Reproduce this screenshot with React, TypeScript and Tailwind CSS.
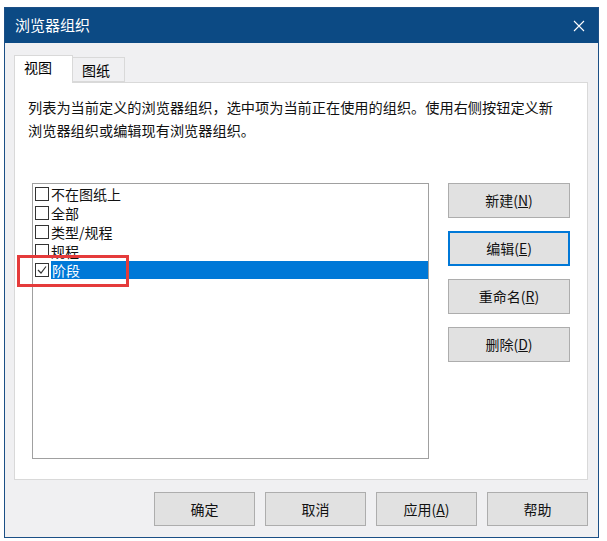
import React from "react";

const items = ["不在图纸上", "全部", "类型/规程", "规程", "阶段"];

const SideButton: React.FC<{ label: string; k: string; focused?: boolean }> = ({
  label,
  k,
  focused,
}) => (
  <button
    type="button"
    className={`flex h-[35px] w-[122px] items-center justify-center bg-[#e1e1e1] text-[14px] text-[#111] ${
      focused ? "border-2 border-[#0078d7]" : "border border-[#adadad]"
    }`}
  >
    {label}(<span className="underline">{k}</span>)
  </button>
);

const FooterButton: React.FC<{ children: React.ReactNode }> = ({ children }) => (
  <button
    type="button"
    className="flex h-[34px] w-[101px] items-center justify-center border border-[#adadad] bg-[#e1e1e1] text-[14px] text-[#111]"
  >
    {children}
  </button>
);

export default function App() {
  const [checked, setChecked] = React.useState<boolean[]>([false, false, false, false, true]);

  return (
    <div
      className="h-[541px] w-[607px] bg-white pl-[4px] pt-[7px]"
      style={{ fontFamily: '"Noto Sans CJK SC", "Noto Sans", sans-serif' }}
    >
      {/* dialog window */}
      <div className="flex h-[531px] w-[595px] flex-col border border-[#1b4f86] bg-[#f0f0f2]">
        {/* title bar */}
        <div className="flex h-[35px] shrink-0 items-center justify-between bg-[#0c4a84] pl-[10px] pr-[13px] text-white">
          <span className="text-[15px]">浏览器组织</span>
          <svg width="12" height="12" viewBox="0 0 12 12" stroke="white" strokeWidth="1.1">
            <path d="M1 1L11 11M11 1L1 11" />
          </svg>
        </div>

        {/* body */}
        <div className="flex flex-1 flex-col pl-[9px] pr-[10px] pt-[12px]">
          {/* tabs */}
          <div className="relative z-10 flex h-[27px] items-end">
            <div className="-mb-px flex h-[28px] w-[59px] items-start border border-b-0 border-[#d9d9d9] bg-white pl-[9px] pt-[1px] text-[14px]">
              视图
            </div>
            <div className="flex h-[25px] w-[52px] items-start border border-l-0 border-[#d9d9d9] bg-[#f0f0f2] pl-[9px] pt-[2px] text-[14px]">
              图纸
            </div>
          </div>

          {/* tab panel */}
          <div className="flex h-[398px] flex-col border border-[#d9d9d9] bg-white pl-[13px] pt-[13px]">
            <p className="whitespace-nowrap text-[14.2px] leading-[23px] text-[#111]">
              列表为当前定义的浏览器组织，选中项为当前正在使用的组织。使用右侧按钮定义新
              <br />
              浏览器组织或编辑现有浏览器组织。
            </p>

            <div className="mt-[41px] flex items-start">
              {/* list box */}
              <div className="ml-[4px] flex h-[276px] w-[397px] flex-col border border-[#a0a0a0] bg-white">
                {items.map((item, i) => (
                  <div
                    key={item}
                    className="relative flex h-[19px] items-center pl-[2px]"
                    onClick={() => setChecked(checked.map((c, j) => (j === i ? !c : c)))}
                  >
                    <span className="flex h-[14px] w-[14px] shrink-0 items-center justify-center border border-[#333] bg-white">
                      {checked[i] && (
                        <svg width="10" height="10" viewBox="0 0 10 10" fill="none" stroke="#333" strokeWidth="1.2">
                          <path d="M1 5L4 8L9 1.5" />
                        </svg>
                      )}
                    </span>
                    <span
                      className={`ml-[2px] flex h-[18px] items-center text-[14px] leading-none ${
                        i === 4 ? "flex-1 bg-[#0078d7] pl-[1px] text-white" : "text-[#111]"
                      }`}
                    >
                      {item}
                    </span>
                    {i === 4 && (
                      <div className="pointer-events-none absolute left-[-16px] top-[-5px] h-[32px] w-[112px] border-[3px] border-[#e53b3b]" />
                    )}
                  </div>
                ))}
              </div>

              {/* action buttons */}
              <div className="ml-[19px] flex flex-col gap-[13px]">
                <SideButton label="新建" k="N" />
                <SideButton label="编辑" k="E" focused />
                <SideButton label="重命名" k="R" />
                <SideButton label="删除" k="D" />
              </div>
            </div>
          </div>

          {/* footer buttons */}
          <div className="mt-[12px] flex justify-end gap-[10px]">
            <FooterButton>确定</FooterButton>
            <FooterButton>取消</FooterButton>
            <FooterButton>
              应用(<span className="underline">A</span>)
            </FooterButton>
            <FooterButton>帮助</FooterButton>
          </div>
        </div>
      </div>
    </div>
  );
}
